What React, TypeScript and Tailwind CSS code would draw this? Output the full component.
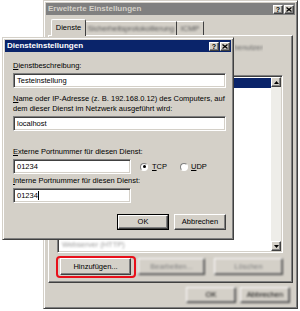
const frame =
  'bg-[#d4d0c8] border border-t-[#d4d0c8] border-l-[#d4d0c8] border-r-[#404040] border-b-[#404040] shadow-[inset_1px_1px_0_#fff,inset_-1px_-1px_0_#808080] p-[2px]';
const raised =
  'bg-[#d4d0c8] border border-t-white border-l-white border-r-[#404040] border-b-[#404040] shadow-[inset_-1px_-1px_0_#808080]';
const sunken =
  'bg-white border border-t-[#808080] border-l-[#808080] border-r-white border-b-white shadow-[inset_1px_1px_0_#404040,inset_-1px_-1px_0_#d4d0c8]';

function CaptionButton({ children }: { children: React.ReactNode }) {
  return (
    <div className={`w-[10px] h-[9px] flex items-center justify-center ${raised}`}>
      {children}
    </div>
  );
}

function TitleBar({ title, active }: { title: string; active: boolean }) {
  return (
    <div
      className={`flex items-center h-[12px] pl-[2px] pr-[1px] ${
        active ? 'bg-[#0a246a] text-white' : 'bg-[#808080] text-[#d4d0c8]'
      }`}
    >
      <span className="flex-1 font-bold text-[8px] leading-[12px] whitespace-nowrap">{title}</span>
      <div className="flex gap-[1px]">
        <CaptionButton>
          <span className="font-bold text-[7px] leading-[7px] text-black">?</span>
        </CaptionButton>
        <CaptionButton>
          <svg width="6" height="5" viewBox="0 0 6 5">
            <path d="M0.5 0.5 L5.5 4.5 M5.5 0.5 L0.5 4.5" stroke="#000" strokeWidth="1.3" />
          </svg>
        </CaptionButton>
      </div>
    </div>
  );
}

function TextBox({ value, width, caret }: { value: string; width: string; caret?: boolean }) {
  return (
    <div className={`h-[15px] flex items-center pl-[3px] ${width} ${sunken}`}>
      <span className="whitespace-nowrap">{value}</span>
      {caret && <span className="w-[1px] h-[9px] bg-black" />}
    </div>
  );
}

function Radio({ checked }: { checked?: boolean }) {
  return (
    <span className="w-[8px] h-[8px] rounded-full flex items-center justify-center bg-white border border-t-[#808080] border-l-[#808080] border-r-white border-b-white">
      {checked && <span className="w-[3px] h-[3px] rounded-full bg-black" />}
    </span>
  );
}

function ArrowButton({ up }: { up?: boolean }) {
  return (
    <div className={`h-[10px] flex items-center justify-center ${raised}`}>
      <svg width="5" height="3" viewBox="0 0 5 3">
        <path d={up ? 'M2.5 0 L5 3 L0 3 Z' : 'M0 0 L5 0 L2.5 3 Z'} fill="#000" />
      </svg>
    </div>
  );
}

function OuterWindow() {
  return (
    <div className={`absolute left-[43px] top-0 w-[255px] h-[309px] flex flex-col ${frame}`}>
      <TitleBar title="Erweiterte Einstellungen" active={false} />
      <div className="flex flex-col px-[2px] pt-[4px]">
        {/* tabs */}
        <div className="flex items-end h-[16px] pl-[3px]">
          <div className="relative z-10 -mb-[1px] w-[35px] h-[17px] flex items-center justify-center bg-[#d4d0c8] border-t border-l border-r border-t-white border-l-white border-r-[#404040] rounded-t-[2px]">
            Dienste
          </div>
          <div className="h-[14px] w-[91px] flex items-center justify-center border-t border-r border-t-white border-r-[#404040]">
            <span className="blur-[1px] text-[#555] whitespace-nowrap">Sicherheitsprotokollierung</span>
          </div>
          <div className="h-[14px] w-[27px] flex items-center justify-center border-t border-r border-t-white border-r-[#404040]">
            <span className="blur-[1px] text-[#555]">ICMP</span>
          </div>
        </div>

        {/* tab panel; the part under the service dialog is left empty */}
        <div className="h-[248px] flex flex-col border border-t-white border-l-white border-r-[#404040] border-b-[#404040] shadow-[inset_-1px_-1px_0_#808080]">
          <div className="mt-[7px] ml-[186px] w-[28px] flex justify-end overflow-hidden">
            <span className="blur-[1px] text-[#666] whitespace-nowrap">benutzer</span>
          </div>

          <div className={`mt-[22px] ml-[8px] w-[226px] h-[178px] flex ${sunken} p-[1px]`}>
            <div className="flex-1 flex flex-col pl-[1px] pt-[1px]">
              <div className="h-[10px] bg-[#0a246a]" />
              <div className="mt-auto mb-[1px] h-[10px] pl-[2px] flex items-center">
                <span className="blur-[1px] text-[#999] whitespace-nowrap">Webserver (HTTP)</span>
              </div>
            </div>
            <div className="w-[10px] flex flex-col bg-[#eeede9]">
              <ArrowButton up />
              <div className="flex-1" />
              <ArrowButton />
            </div>
          </div>

          <div className="mt-[5px] flex items-center">
            <div className="relative ml-[11px]">
              <div className={`w-[71px] h-[17px] flex items-center justify-center ${raised}`}>
                Hinzufügen...
              </div>
              <div className="absolute -left-[4px] -top-[2px] -right-[5px] -bottom-[3px] border-2 border-[#e8101a] rounded-[4px]" />
            </div>
            <div className={`ml-[7px] w-[67px] h-[17px] flex items-center justify-center blur-[1px] ${raised}`}>
              <span className="text-[#808080]">Bearbeiten...</span>
            </div>
            <div className={`ml-[9px] w-[69px] h-[17px] flex items-center justify-center blur-[1px] ${raised}`}>
              <span className="text-[#808080]">Löschen</span>
            </div>
          </div>
        </div>

        <div className="mt-[4px] flex justify-end gap-[4px] pr-[3px]">
          <div className={`w-[50px] h-[16px] flex items-center justify-center blur-[1px] ${raised}`}>OK</div>
          <div className={`w-[50px] h-[16px] flex items-center justify-center blur-[1px] ${raised}`}>Abbrechen</div>
        </div>
      </div>
    </div>
  );
}

function ServiceDialog() {
  return (
    <div className={`absolute left-[2px] top-[37px] w-[232px] h-[203px] flex flex-col ${frame}`}>
      <TitleBar title="Diensteinstellungen" active />
      <div className="flex flex-col pl-[8px] pr-[5px] whitespace-nowrap">
        <div className="mt-[9px] h-[10px]">
          <span className="underline">D</span>ienstbeschreibung:
        </div>
        <div className="mt-[2px]">
          <TextBox value="Testeinstellung" width="w-full" />
        </div>

        <div className="mt-[6px] h-[20px]">
          <span className="underline">N</span>ame oder IP-Adresse (z. B. 192.168.0.12) des Computers, auf
          <br />
          dem dieser Dienst im Netzwerk ausgeführt wird:
        </div>
        <div className="mt-[2px]">
          <TextBox value="localhost" width="w-full" />
        </div>

        <div className="mt-[16px] h-[10px]">
          <span className="underline">E</span>xterne Portnummer für diesen Dienst:
        </div>
        <div className="mt-[2px] flex items-center">
          <TextBox value="01234" width="w-[118px]" />
          <div className="ml-[9px] flex items-center gap-[4px]">
            <Radio checked />
            <span>
              <span className="underline">T</span>CP
            </span>
          </div>
          <div className="ml-[13px] flex items-center gap-[3px]">
            <Radio />
            <span>
              <span className="underline">U</span>DP
            </span>
          </div>
        </div>

        <div className="mt-[2px] h-[10px]">
          <span className="underline">I</span>nterne Portnummer für diesen Dienst:
        </div>
        <div className="mt-[2px]">
          <TextBox value="01234" width="w-[118px]" caret />
        </div>

        <div className="mt-[11px] flex justify-end gap-[5px]">
          <div className="border border-black">
            <div className={`w-[50px] h-[14px] flex items-center justify-center ${raised}`}>OK</div>
          </div>
          <div className={`w-[52px] h-[16px] flex items-center justify-center ${raised}`}>Abbrechen</div>
        </div>
      </div>
    </div>
  );
}

export default function App() {
  return (
    <div className="relative w-[300px] h-[311px] overflow-hidden bg-white font-['Liberation_Sans',Arial,sans-serif] text-[7.5px] leading-[10px] text-black">
      <OuterWindow />
      <ServiceDialog />
    </div>
  );
}
